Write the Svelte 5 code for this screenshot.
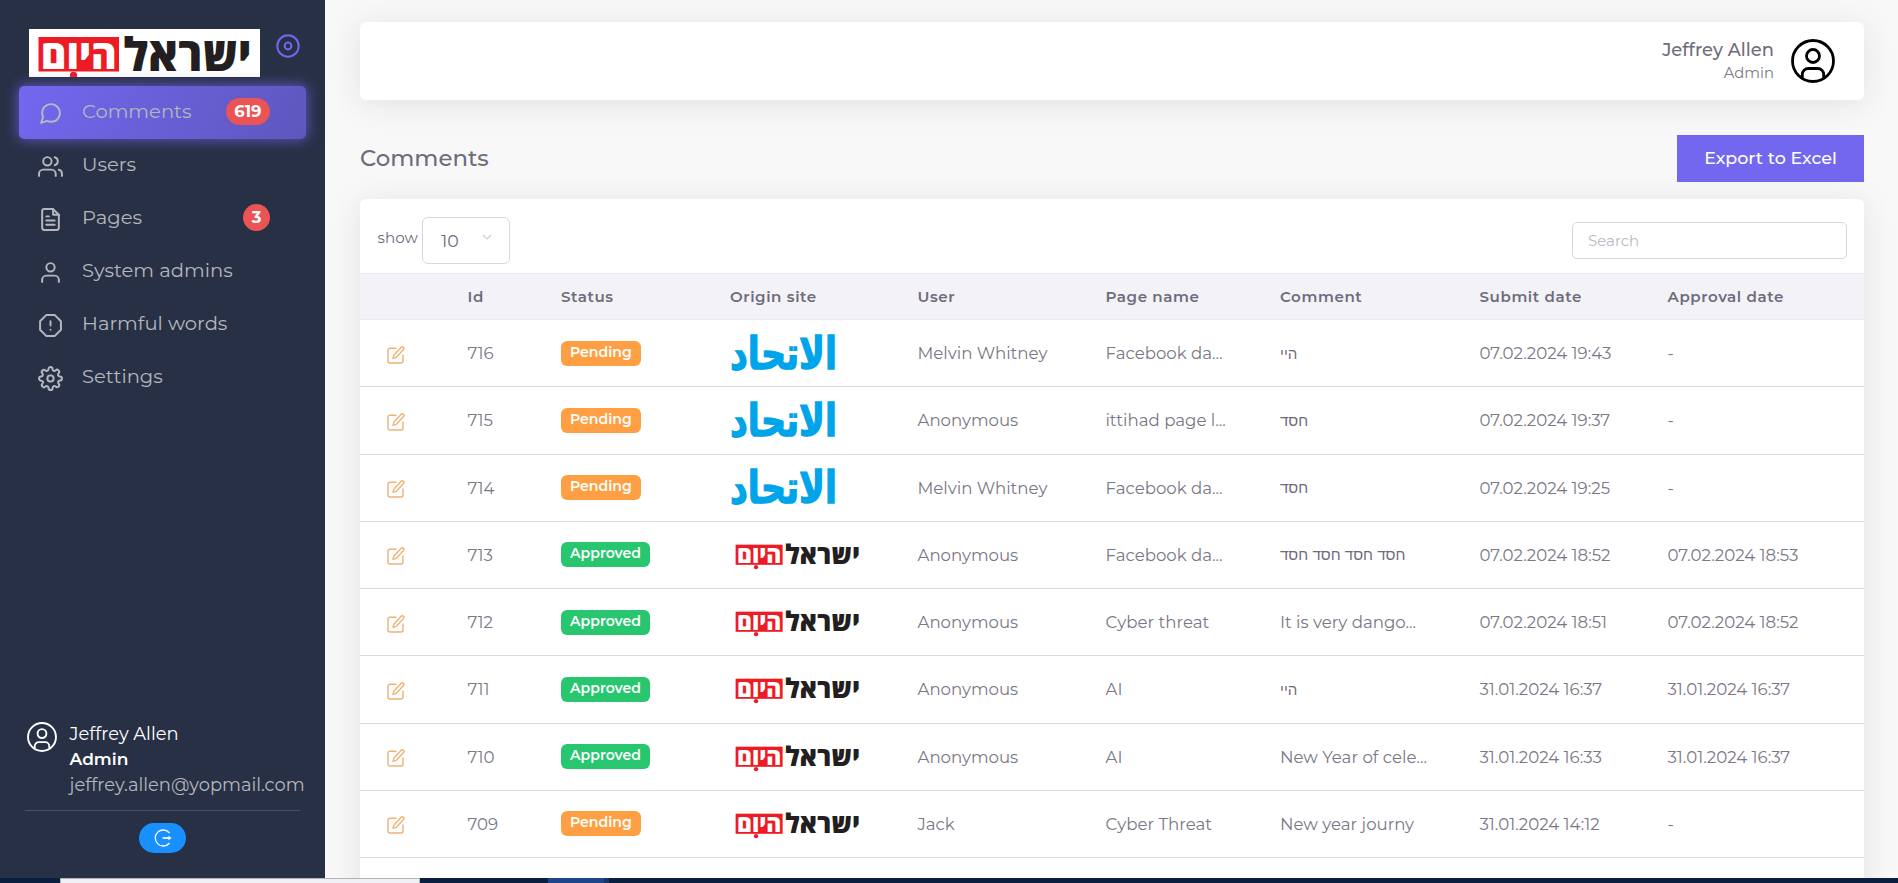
<script lang="ts">
	interface NavItem {
		icon: string;
		label: string;
		badge?: number;
	}

	interface CommentRow {
		id: number;
		status: 'Pending' | 'Approved';
		site: 'ittihad' | 'hayom';
		user: string;
		page: string;
		comment: string;
		submitted: string;
		approved: string;
	}

	const navItems: NavItem[] = [
		{ icon: 'message', label: 'Comments', badge: 619 },
		{ icon: 'users', label: 'Users' },
		{ icon: 'file', label: 'Pages', badge: 3 },
		{ icon: 'user', label: 'System admins' },
		{ icon: 'alert', label: 'Harmful words' },
		{ icon: 'settings', label: 'Settings' }
	];

	const columns = ['', 'Id', 'Status', 'Origin site', 'User', 'Page name', 'Comment', 'Submit date', 'Approval date'];

	const rows: CommentRow[] = [
		{ id: 716, status: 'Pending', site: 'ittihad', user: 'Melvin Whitney', page: 'Facebook da...', comment: 'היי', submitted: '07.02.2024 19:43', approved: '-' },
		{ id: 715, status: 'Pending', site: 'ittihad', user: 'Anonymous', page: 'ittihad page l...', comment: 'חסד', submitted: '07.02.2024 19:37', approved: '-' },
		{ id: 714, status: 'Pending', site: 'ittihad', user: 'Melvin Whitney', page: 'Facebook da...', comment: 'חסד', submitted: '07.02.2024 19:25', approved: '-' },
		{ id: 713, status: 'Approved', site: 'hayom', user: 'Anonymous', page: 'Facebook da...', comment: 'חסד חסד חסד חסד', submitted: '07.02.2024 18:52', approved: '07.02.2024 18:53' },
		{ id: 712, status: 'Approved', site: 'hayom', user: 'Anonymous', page: 'Cyber threat', comment: 'It is very dango...', submitted: '07.02.2024 18:51', approved: '07.02.2024 18:52' },
		{ id: 711, status: 'Approved', site: 'hayom', user: 'Anonymous', page: 'AI', comment: 'היי', submitted: '31.01.2024 16:37', approved: '31.01.2024 16:37' },
		{ id: 710, status: 'Approved', site: 'hayom', user: 'Anonymous', page: 'AI', comment: 'New Year of cele...', submitted: '31.01.2024 16:33', approved: '31.01.2024 16:37' },
		{ id: 709, status: 'Pending', site: 'hayom', user: 'Jack', page: 'Cyber Threat', comment: 'New year journy', submitted: '31.01.2024 14:12', approved: '-' }
	];

	let active = $state('Comments');
	let search = $state('');

	const isHebrew = (text: string) => /[\u0590-\u05ff]/.test(text);
</script>

{#snippet hayomLogo()}
	<svg class="hayom" viewBox="0 0 231 50" aria-label="ישראל היום">
		<rect x="9.5" y="8" width="80.5" height="34.5" fill="#ed1c24" />
		<text class="hayom-text" x="49.7" y="39.7" font-size="40" textLength="76" lengthAdjust="spacingAndGlyphs" fill="#fff">היום</text>
		<circle class="dot" cx="44.5" cy="46.5" r="3.7" fill="#ed1c24" />
		<text class="hayom-text" x="158.5" y="41.5" font-size="46" textLength="128" lengthAdjust="spacingAndGlyphs" fill="#231f20">ישראל</text>
	</svg>
{/snippet}

{#snippet ittihadLogo()}
	<svg class="ittihad" viewBox="0 0 106 37" aria-label="الاتحاد">
		<text class="ittihad-text" transform="scale(1 1.17)" x="53.5" y="28.7" font-size="38" textLength="107" lengthAdjust="spacingAndGlyphs" fill="#00a4e8" stroke="#00a4e8" stroke-width="1.2">الاتحاد</text>
	</svg>
{/snippet}

{#snippet personIcon()}
	<svg class="person" viewBox="0 0 44 44" fill="none" stroke="currentColor" stroke-width="2.8">
		<circle cx="22" cy="22" r="20.5" />
		<circle cx="22" cy="17" r="6.5" />
		<path d="M11.3 39v-3.5a6 6 0 0 1 6-6h9.4a6 6 0 0 1 6 6V39" />
	</svg>
{/snippet}

<div class="screen">
	<aside class="sidebar">
		<div class="brand">
			<div class="brand-logo">{@render hayomLogo()}</div>
			<svg class="pin" viewBox="0 0 24 24" fill="none" stroke="#7367f0" stroke-width="2">
				<circle cx="12" cy="12" r="10.7" />
				<circle cx="12" cy="12" r="3.4" />
			</svg>
		</div>

		<nav>
			{#each navItems as item (item.label)}
				<button class="nav-item" class:active={active === item.label} type="button" onclick={() => (active = item.label)}>
					<svg class="nav-icon" viewBox="0 0 24 24" fill="none" stroke="currentColor" stroke-width="1.9" stroke-linecap="round" stroke-linejoin="round">
						{#if item.icon === 'message'}
							<path d="M21 11.5a8.38 8.38 0 0 1-.9 3.8 8.5 8.5 0 0 1-7.6 4.7 8.38 8.38 0 0 1-3.8-.9L3 21l1.9-5.7a8.38 8.38 0 0 1-.9-3.8 8.5 8.5 0 0 1 4.7-7.6 8.38 8.38 0 0 1 3.8-.9h.5a8.48 8.48 0 0 1 8 8v.5z" />
						{:else if item.icon === 'users'}
							<path d="M17 21v-2a4 4 0 0 0-4-4H5a4 4 0 0 0-4 4v2" />
							<circle cx="9" cy="7" r="4" />
							<path d="M23 21v-2a4 4 0 0 0-3-3.87M16 3.13a4 4 0 0 1 0 7.75" />
						{:else if item.icon === 'file'}
							<path d="M14.5 2H6a2 2 0 0 0-2 2v16a2 2 0 0 0 2 2h12a2 2 0 0 0 2-2V7.5z" />
							<path d="M14.5 2v5.5H20M16 13H8M16 17H8M10.5 9H8" />
						{:else if item.icon === 'user'}
							<path d="M20 21v-2a4 4 0 0 0-4-4H8a4 4 0 0 0-4 4v2" />
							<circle cx="12" cy="7" r="4" />
						{:else if item.icon === 'alert'}
							<path d="M7.86 2h8.28L22 7.86v8.28L16.14 22H7.86L2 16.14V7.86zM12 8v4M12 16h.01" />
						{:else}
							<circle cx="12" cy="12" r="3" />
							<path d="M19.4 15a1.65 1.65 0 0 0 .33 1.82l.06.06a2 2 0 0 1-2.83 2.83l-.06-.06a1.65 1.65 0 0 0-1.82-.33 1.65 1.65 0 0 0-1 1.51V21a2 2 0 0 1-4 0v-.09A1.65 1.65 0 0 0 9 19.4a1.65 1.65 0 0 0-1.82.33l-.06.06a2 2 0 0 1-2.83-2.83l.06-.06a1.65 1.65 0 0 0 .33-1.82 1.65 1.65 0 0 0-1.51-1H3a2 2 0 0 1 0-4h.09A1.65 1.65 0 0 0 4.6 9a1.65 1.65 0 0 0-.33-1.82l-.06-.06a2 2 0 0 1 2.83-2.83l.06.06a1.65 1.65 0 0 0 1.82.33H9a1.65 1.65 0 0 0 1-1.51V3a2 2 0 0 1 4 0v.09a1.65 1.65 0 0 0 1 1.51 1.65 1.65 0 0 0 1.82-.33l.06-.06a2 2 0 0 1 2.83 2.83l-.06.06a1.65 1.65 0 0 0-.33 1.82V9a1.65 1.65 0 0 0 1.51 1H21a2 2 0 0 1 0 4h-.09a1.65 1.65 0 0 0-1.51 1z" />
						{/if}
					</svg>
					<span class="nav-label">{item.label}</span>
					{#if item.badge}
						<span class="nav-badge">{item.badge}</span>
					{/if}
				</button>
			{/each}
		</nav>

		<div class="account">
			<div class="account-info">
				{@render personIcon()}
				<div class="account-text">
					<span class="account-name">Jeffrey Allen</span>
					<span class="account-role">Admin</span>
					<span class="account-mail">jeffrey.allen@yopmail.com</span>
				</div>
			</div>
			<hr />
			<button class="logout" type="button" aria-label="Log out">
				<svg viewBox="0 0 18 18" fill="none" stroke="#fff" stroke-width="1.3">
					<path d="M15.5 4A8 8 0 1 0 15.5 14" />
					<path d="M8.5 9H15" stroke-width="1.7" />
					<path d="M14.5 6.7L17.7 9l-3.2 2.3z" fill="#fff" stroke="none" />
				</svg>
			</button>
		</div>
	</aside>

	<main>
		<header class="topbar">
			<div class="topbar-text">
				<span class="topbar-name">Jeffrey Allen</span>
				<span class="topbar-role">Admin</span>
			</div>
			{@render personIcon()}
		</header>

		<div class="page-head">
			<h1>Comments</h1>
			<button class="export" type="button">Export to Excel</button>
		</div>

		<section class="card">
			<div class="toolbar">
				<span class="show">show</span>
				<button class="page-size" type="button">
					<span>10</span>
					<svg viewBox="0 0 10 6" fill="none" stroke="#d0ced8" stroke-width="1.2">
						<path d="M1 1l4 4 4-4" />
					</svg>
				</button>
				<input class="search" type="text" placeholder="Search" bind:value={search} />
			</div>

			<div class="row head">
				{#each columns as column}
					<span>{column}</span>
				{/each}
			</div>

			{#each rows as row (row.id)}
				<div class="row">
					<svg class="edit" viewBox="0 0 18 18" fill="none" stroke="#efb274" stroke-width="1.4" stroke-linejoin="round" stroke-linecap="round">
						<path d="M9 2.2H3a2 2 0 0 0-2 2V15a2 2 0 0 0 2 2h11a2 2 0 0 0 2-2V9" />
						<path d="M14.2 1.3a1.5 1.5 0 0 1 2.3 2.2L9.3 11.3l-3.3 1 1-3.3z" />
					</svg>
					<span>{row.id}</span>
					<span class="status" class:approved={row.status === 'Approved'}>{row.status}</span>
					{#if row.site === 'hayom'}
						{@render hayomLogo()}
					{:else}
						{@render ittihadLogo()}
					{/if}
					<span>{row.user}</span>
					<span>{row.page}</span>
					<span class:hebrew={isHebrew(row.comment)}>{row.comment}</span>
					<span>{row.submitted}</span>
					<span>{row.approved}</span>
				</div>
			{/each}
		</section>
	</main>

	<footer class="taskbar">
		<div class="task-search"></div>
		<div class="task-open"></div>
		<div class="task-edge"></div>
	</footer>
</div>

<style>
	:global(body) {
		margin: 0;
		overflow: hidden;
	}

	.screen {
		display: grid;
		grid-template-columns: 325px 1fr;
		grid-template-rows: 878px 5px;
		width: 1898px;
		height: 883px;
		overflow: hidden;
		background: #f8f8f8;
		color: #6e6b7b;
		font-family: Montserrat, Inter, "Open Sans", sans-serif;
	}

	button {
		border: 0;
		margin: 0;
		padding: 0;
		font: inherit;
		cursor: pointer;
	}

	svg {
		display: block;
		flex: none;
	}

	.sidebar {
		display: flex;
		flex-direction: column;
		background: #283046;
		color: #b4b7bd;
	}

	.brand {
		display: flex;
		gap: 15.5px;
		padding: 29px 0 9px 29px;
	}

	.brand-logo {
		width: 231px;
		height: 48px;
		background: #fff;
	}

	.brand-logo .hayom {
		width: 231px;
		height: 50px;
	}

	/* the brand strip ends before the bottom of the dot */
	.brand-logo .dot {
		clip-path: inset(0 0 30% 0);
	}

	.hayom,
	.ittihad {
		overflow: visible;
	}

	.hayom-text,
	.ittihad-text {
		font-weight: 800;
		text-anchor: middle;
	}

	.hayom-text {
		font-family: "Open Sans", "Liberation Sans", sans-serif;
	}

	.ittihad-text {
		font-family: "DejaVu Sans", sans-serif;
	}

	.pin {
		width: 24px;
		height: 24px;
		margin-top: 4.5px;
	}

	.nav-item {
		display: flex;
		align-items: center;
		box-sizing: border-box;
		width: 287px;
		height: 53px;
		margin-left: 19px;
		padding: 0 36px 0 19px;
		border-radius: 5px;
		background: none;
		color: #b4b7bd;
		font-size: 19.55px;
	}

	.nav-item.active {
		background: linear-gradient(118deg, #7367f0, #5e57bd);
		box-shadow: 0 0 13px 1px rgba(115, 103, 240, 0.7);
	}

	.nav-icon {
		width: 25px;
		height: 25px;
		margin: 1px 19px 0 0;
	}

	.nav-label {
		margin-top: -4px;
	}

	.nav-badge {
		box-sizing: border-box;
		min-width: 27px;
		height: 27px;
		margin: -2px 0 0 auto;
		padding: 0 8.5px;
		border-radius: 14px;
		background: #ea5455;
		color: #fff;
		font-size: 16.4px;
		font-weight: 700;
		line-height: 27px;
		text-align: center;
	}

	.account {
		margin-top: auto;
		padding: 0 20px 25px 25px;
	}

	.account-info {
		display: flex;
		color: #fff;
	}

	.account-info .person {
		width: 30px;
		height: 30px;
		margin: 1px 13px 0 1.5px;
	}

	.account-text {
		display: flex;
		flex-direction: column;
		font-size: 17.85px;
		line-height: 26px;
		white-space: nowrap;
	}

	.account-role {
		margin-top: -1px;
		font-size: 17px;
		font-weight: 600;
	}

	.account-mail {
		color: #b4b7bd;
	}

	hr {
		height: 1px;
		margin: 12px 5px 12px 0;
		border: 0;
		background: #474e60;
	}

	.logout {
		display: grid;
		place-items: center;
		width: 47px;
		height: 30px;
		margin: 0 0 0 114px;
		border-radius: 15px;
		background: #1890ff;
	}

	.logout svg {
		width: 18px;
		height: 18px;
	}

	main {
		padding: 22px 34px 0 35px;
		overflow: hidden;
	}

	.topbar {
		display: flex;
		align-items: center;
		justify-content: flex-end;
		box-sizing: border-box;
		height: 78px;
		padding-right: 29px;
		border-radius: 6px;
		background: #fff;
		box-shadow: 0 4px 30px rgba(34, 41, 47, 0.1);
	}

	.topbar .person {
		width: 44px;
		height: 44px;
		margin-left: 17px;
		color: #000;
	}

	.topbar-text {
		display: flex;
		flex-direction: column;
		align-items: flex-end;
	}

	.topbar-name {
		font-size: 17.9px;
		font-weight: 500;
		line-height: 24px;
	}

	.topbar-role {
		color: #7a7786;
		font-size: 14.8px;
		line-height: 22px;
	}

	.page-head {
		display: flex;
		align-items: center;
		justify-content: space-between;
		margin: 35px 0 17px;
	}

	h1 {
		margin: -2px 0 0;
		font-size: 22.8px;
		font-weight: 500;
	}

	.export {
		width: 187px;
		height: 47px;
		padding-bottom: 2px;
		background: #7367f0;
		color: #fff;
		font-size: 17.5px;
		font-weight: 500;
	}

	.card {
		height: 720px;
		border-radius: 6px 6px 0 0;
		background: #fff;
		box-shadow: 0 4px 30px rgba(34, 41, 47, 0.1);
	}

	.toolbar {
		display: flex;
		align-items: center;
		box-sizing: border-box;
		height: 74px;
		padding: 9px 17px 0;
	}

	.show {
		width: 44.5px;
		margin-top: -6px;
		padding-left: 0.5px;
		font-size: 15.2px;
	}

	.page-size {
		display: flex;
		align-items: center;
		box-sizing: border-box;
		width: 88px;
		height: 47px;
		padding: 0 17px 0 18px;
		border: 1px solid #d8d6de;
		border-radius: 6px;
		background: #fff;
		color: #6e6b7b;
		font-size: 17.4px;
	}

	.page-size svg {
		width: 10px;
		height: 6px;
		margin: -8px 0 0 auto;
	}

	.search {
		box-sizing: border-box;
		width: 275px;
		height: 37px;
		margin: 0 0 0 auto;
		padding: 0 15px 1px;
		border: 1px solid #d8d6de;
		border-radius: 5px;
		outline: 0;
		color: #6e6b7b;
		font: 15px Montserrat, Inter, sans-serif;
	}

	.search::placeholder {
		color: #b9b9c3;
	}

	.row {
		display: grid;
		grid-template-columns: 107.5px 93.5px 169px 187.5px 188px 174.5px 199.5px 188px 1fr;
		align-items: center;
		box-sizing: border-box;
		height: 67.28px;
		border-bottom: 1px solid #dcdcde;
		color: #7a7786;
		font-size: 16.6px;
		white-space: nowrap;
	}

	.row.head {
		height: 47px;
		border-top: 1px solid #ebe9f1;
		border-bottom-color: #ebe9f1;
		background: #f3f2f7;
		color: #6e6b7b;
		font-size: 15.1px;
		font-weight: 600;
		letter-spacing: 0.585px;
	}

	.edit {
		width: 18px;
		height: 18px;
		margin: 3px 0 0 26.5px;
	}

	.status {
		justify-self: start;
		height: 25px;
		padding: 0 9px;
		border-radius: 6px;
		background: #ff9f43;
		color: #fff;
		font-size: 14.1px;
		font-weight: 600;
		line-height: 23px;
	}

	.status.approved {
		background: #28c76f;
	}

	.row .hayom {
		width: 135px;
		height: 29.2px;
		margin-top: -1px;
	}

	.ittihad {
		width: 106px;
		height: 37px;
	}

	.hebrew {
		color: #6e6b7b;
		font-family: "Liberation Sans", sans-serif;
		font-size: 15.1px;
	}

	.taskbar {
		grid-column: 1 / -1;
		display: flex;
		box-sizing: border-box;
		padding-left: 60px;
		background: #0a1e3f;
	}

	.task-search {
		box-sizing: border-box;
		width: 360px;
		border: 1px solid #b5b5b8;
		border-bottom: 0;
		background: #f0f0f4;
	}

	.task-open {
		width: 56px;
		margin-left: 128px;
		background: #1c458a;
	}

	.task-edge {
		width: 5px;
		background: #173663;
	}
</style>
